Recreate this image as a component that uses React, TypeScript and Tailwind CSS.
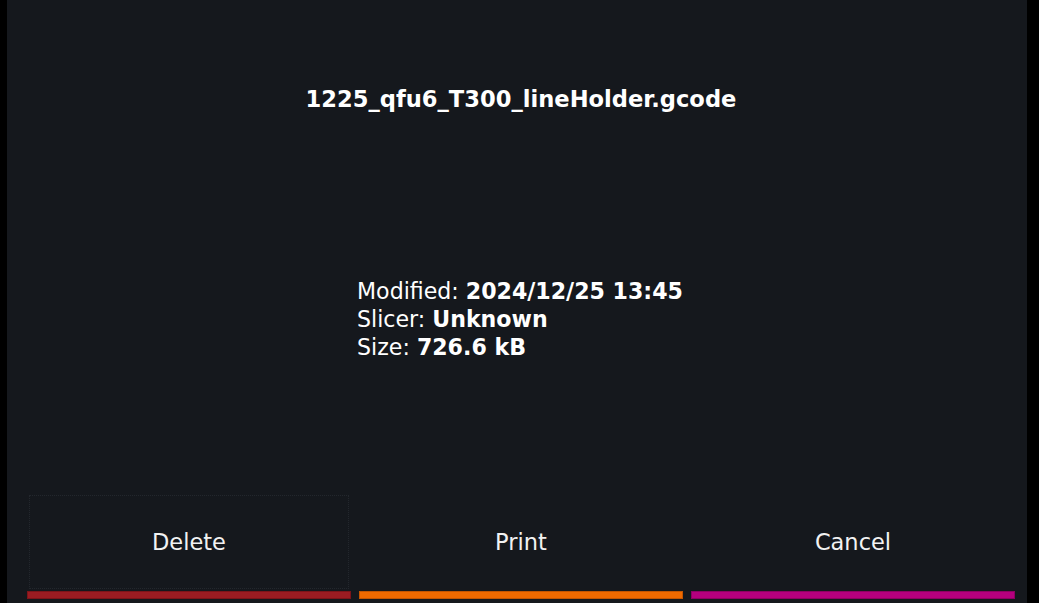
import React from "react";

export default function App() {
  const font = { fontFamily: '"DejaVu Sans", "Liberation Sans", sans-serif' };
  return (
    <div className="w-[1039px] h-[603px] bg-black flex overflow-hidden" style={font}>
      <div className="ml-[7px] w-[1020px] h-full bg-[#15181d] flex flex-col pl-[20px] pr-[12px]">
        <div className="mt-[86px] text-center text-white font-bold text-[22.6px] leading-[26px]">
          1225_qfu6_T300_lineHolder.gcode
        </div>
        <div className="mt-[165px] flex justify-center">
          <div className="text-white text-[22.1px] leading-[28px] -translate-x-[1px]">
            <div>
              Modified: <span className="font-bold">2024/12/25 13:45</span>
            </div>
            <div>
              Slicer: <span className="font-bold">Unknown</span>
            </div>
            <div>
              Size: <span className="font-bold">726.6 kB</span>
            </div>
          </div>
        </div>
        <div className="mt-auto mb-[4px] h-[106px] grid grid-cols-3 gap-[8px]">
          <Btn label="Delete" bar="bg-[#9b1c22] border-[#7d1419]" focused />
          <Btn label="Print" bar="bg-[#f06a00] border-[#c45500]" />
          <Btn label="Cancel" bar="bg-[#b5007e] border-[#8e0063]" />
        </div>
      </div>
    </div>
  );
}

function Btn({ label, bar, focused }: { label: string; bar: string; focused?: boolean }) {
  return (
    <div className="relative flex flex-col h-full">
      {focused && (
        <div className="absolute left-[2px] right-[2px] top-[2px] bottom-[10px] border border-dotted border-[#23272d]" />
      )}
      <div className="flex-1 flex items-center justify-center text-[#f2f2f2] text-[22.5px] leading-[26px]">
        {label}
      </div>
      <div className={`h-[8px] border ${bar}`} />
    </div>
  );
}
